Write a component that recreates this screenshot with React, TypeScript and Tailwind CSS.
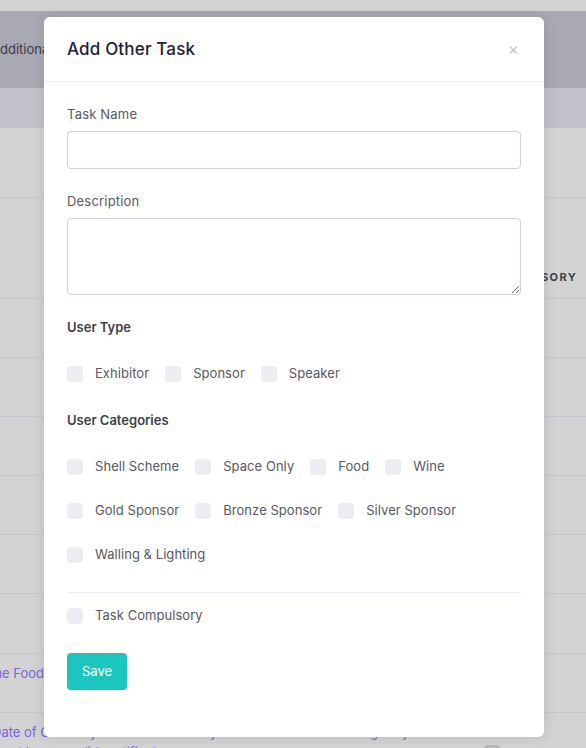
import { useState } from "react";

const FONT = { fontFamily: "Inter, 'Noto Sans', sans-serif" };

const USER_TYPES = ["Exhibitor", "Sponsor", "Speaker"];
const CATEGORY_ROWS = [
  ["Shell Scheme", "Space Only", "Food", "Wine"],
  ["Gold Sponsor", "Bronze Sponsor", "Silver Sponsor"],
  ["Walling & Lighting"],
];

function Check({ label }: { label: string }) {
  const [on, setOn] = useState(false);
  return (
    <label className="flex h-5 cursor-pointer items-center gap-3 text-[13px] tracking-[0.004em] text-[#575962]">
      <span
        onClick={() => setOn(!on)}
        className={`mt-[2px] h-4 w-4 shrink-0 rounded-[4px] ${on ? "bg-[#1cc5bd]" : "bg-[#ebedf2]"}`}
      />
      <span className="mt-[2px]">{label}</span>
    </label>
  );
}

function Backdrop() {
  return (
    <div className="flex h-full w-full flex-col bg-[#d3d3d3] text-[13px]">
      <div className="h-[11px] shrink-0 bg-[#d4d4d4]" />
      <div className="flex h-[77px] shrink-0 items-center bg-[#a9a9b4]">
        <span className="ml-[-9px] text-[#3a3a48]">Additional Tasks</span>
      </div>
      <div className="h-[40px] shrink-0 bg-[#c0c1c9]" />
      <div className="h-[70px] shrink-0 border-b border-[#c6c6ce]" />
      <div className="flex h-[101px] shrink-0 items-end justify-end border-b border-[#c6c6ce] pb-[13px] pr-[9px]">
        <span className="text-[11px] font-bold tracking-[0.12em] text-[#3f4047]">COMPULSORY</span>
      </div>
      <div className="h-[59px] shrink-0 border-b border-[#c6c6ce]" />
      <div className="h-[59px] shrink-0 border-b border-[#c6c6ce]" />
      <div className="h-[59px] shrink-0 border-b border-[#c6c6ce]" />
      <div className="h-[59px] shrink-0 border-b border-[#c6c6ce]" />
      <div className="h-[59px] shrink-0 border-b border-[#c6c6ce]" />
      <div className="h-[60px] shrink-0 border-b border-[#c6c6ce]" />
      <div className="flex h-[59px] shrink-0 items-start border-b border-[#c6c6ce] pt-[9px]">
        <span className="ml-[-14px] whitespace-nowrap leading-5 text-[#7a63d9]">The Food and Wine Pavilion</span>
      </div>
      <div className="flex shrink-0 flex-col pt-[10px]">
        <span className="ml-[-8px] whitespace-nowrap text-[#7a63d9]">
          Date of Currency for the event or if you are an Australian Designer you
        </span>
        <div className="flex items-center">
          <span className="ml-[-8px] whitespace-nowrap text-[#7a63d9]">must have a valid certificate</span>
          <span className="ml-auto mr-[86px] mt-[2px] h-4 w-4 rounded-[4px] bg-[#b9b9bf]" />
        </div>
      </div>
    </div>
  );
}

export default function App() {
  return (
    <div className="relative h-[748px] w-[586px] overflow-hidden" style={FONT}>
      <Backdrop />

      <div className="absolute left-[44px] top-[17px] w-[500px] rounded-[6px] bg-white shadow-[0_0_14px_rgba(0,0,0,0.12)]">
        <div className="flex h-[65px] items-center justify-between border-b border-[#ebedf2] px-[23px]">
          <h5 className="mt-[2px] text-[17px] font-medium tracking-[0.01em] text-[#1e2235]">Add Other Task</h5>
          <button className="mr-[2px] text-[17px] leading-none text-[#c5c6d3]">×</button>
        </div>

        <div className="flex flex-col px-[23px] pb-[47px] pt-[22px]">
          <label className="h-5 text-[13px] leading-5 tracking-[0.015em] text-[#575962]">Task Name</label>
          <input className="mt-[7px] h-[38px] w-full rounded-[4px] border border-[#cdd1de] px-3 text-[13px] outline-none" />

          <label className="mt-[22px] h-5 text-[13px] leading-5 tracking-[0.015em] text-[#575962]">Description</label>
          <textarea className="mt-[7px] h-[77px] w-full rounded-[4px] border border-[#cdd1de] px-3 py-2 text-[13px] outline-none" />

          <p className="mt-[22px] h-5 text-[13px] font-semibold leading-5 text-[#3f4047]">User Type</p>
          <div className="mt-[26px] flex gap-4">
            {USER_TYPES.map((t) => (
              <Check key={t} label={t} />
            ))}
          </div>

          <p className="mt-[27px] h-5 text-[13px] font-semibold leading-5 text-[#3f4047]">User Categories</p>
          <div className="mt-[26px] flex flex-col gap-6">
            {CATEGORY_ROWS.map((row) => (
              <div key={row[0]} className="flex gap-4">
                {row.map((c) => (
                  <Check key={c} label={c} />
                ))}
              </div>
            ))}
          </div>

          <div className="mt-[28px] h-px bg-[#ebedf2]" />
          <div className="mt-[12px]">
            <Check label="Task Compulsory" />
          </div>

          <div className="mt-[28px]">
            <button className="h-[37px] w-[60px] rounded-[4px] bg-[#1cc5bd] text-[13px] text-white">Save</button>
          </div>
        </div>
      </div>
    </div>
  );
}
